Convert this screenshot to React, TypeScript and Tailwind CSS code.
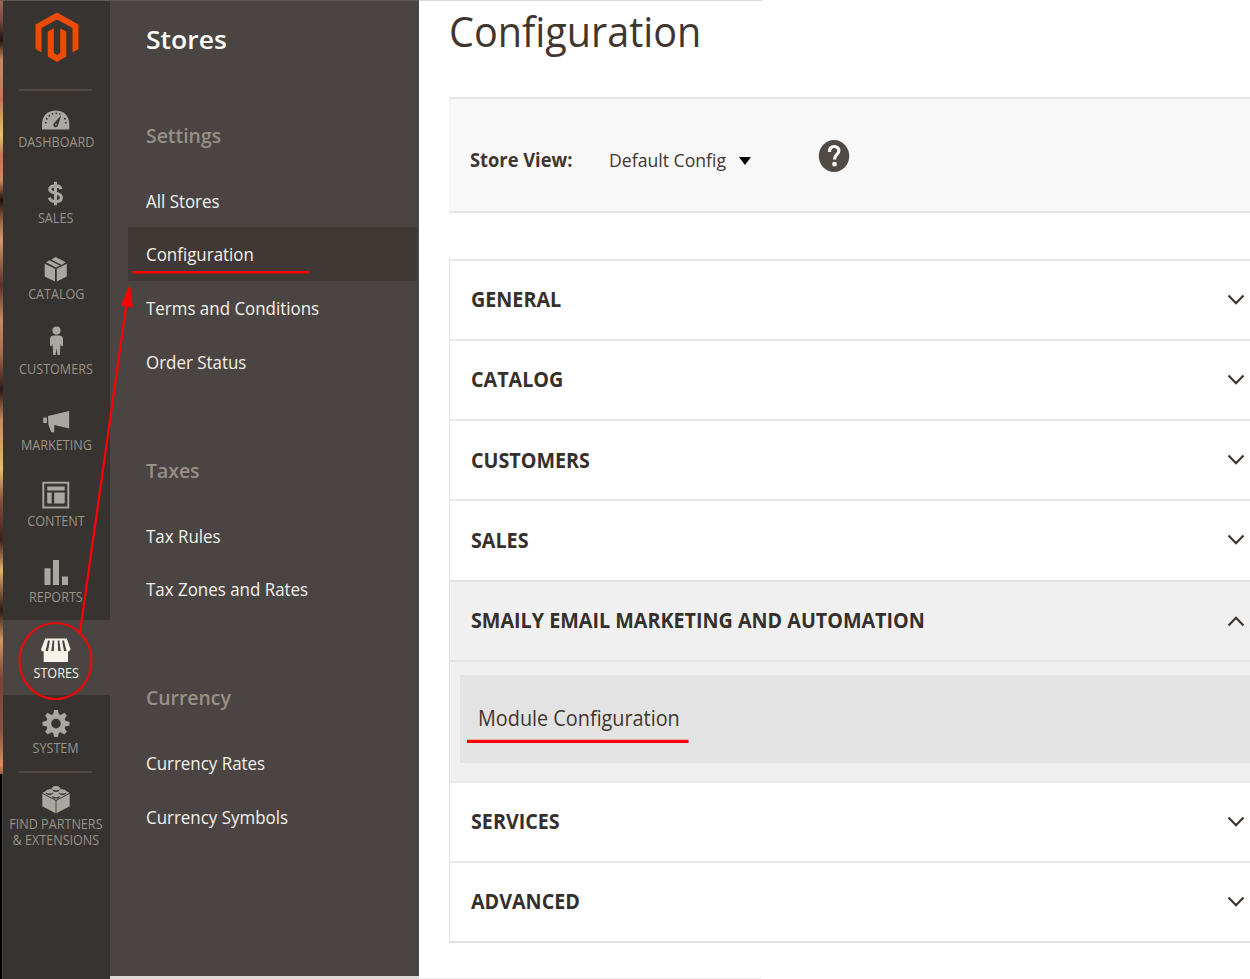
import React from 'react';

type NavItem = { label: string[]; icon: React.ReactNode; y: number; active?: boolean };

const navItems: NavItem[] = [
  {
    label: ['DASHBOARD'],
    y: 104,
    icon: (
      <>
        <path d="M42 129.500V124C42 115.500 48 110.500 55.700 110.500S69.300 115.500 69.300 124V129.500Z" />
        <path d="M53.800 123.500A2.400 2.400 0 1 0 58.200 124.800L61.200 115.200Z" fill="#373330" />
        <circle cx="56" cy="124.300" r="0.900" />
        <g fill="#373330">
          <rect x="45" y="122" width="1.600" height="1.400" />
          <rect x="46" y="118" width="1.600" height="1.600" />
          <rect x="48.500" y="115" width="1.600" height="1.600" />
          <rect x="51.800" y="113.200" width="1.500" height="1.500" />
          <rect x="55.500" y="112.700" width="1.500" height="1.500" />
          <rect x="59" y="113.300" width="1.500" height="1.300" />
          <rect x="64" y="118" width="1.600" height="1.600" />
          <rect x="65" y="122" width="1.600" height="1.400" />
        </g>
      </>
    ),
  },
  {
    label: ['SALES'],
    y: 179.8,
    icon: (
      <path
        d="M61 189C60.300 186.500 58.300 185.700 55.800 185.700C52.500 185.700 49.800 187 49.800 189.400C49.800 194.300 61.400 191.300 61.400 197.200C61.400 200 58.800 201.300 55.500 201.300C52.500 201.300 50 200 49.400 197.400M55.500 181.500V205"
        fill="none"
        stroke="currentColor"
        strokeWidth="3.100"
      />
    ),
  },
  {
    label: ['CATALOG'],
    y: 255.6,
    icon: (
      <path d="M44.700 263.300L55 268.300V281.200L44.700 276ZM66.800 263.300V276L56.800 281.200V268.300ZM46 261.900L49.500 259.800L60 265.300L56 267ZM51.200 259L55.700 256.500L65.600 261.900L61.600 264.500Z" />
    ),
  },
  {
    label: ['CUSTOMERS'],
    y: 331.4,
    icon: (
      <>
        <circle cx="56.500" cy="331" r="4.100" />
        <path d="M53.500 335.800H59.500Q63 336.200 63 339.500V346Q62 347.500 61 346L60.500 344L59.800 355.400H57.500L56.500 349L55.500 355.400H53.200L52.500 344L52 346Q51 347.500 50 346V339.500Q50 336.200 53.500 335.800Z" />
      </>
    ),
  },
  {
    label: ['MARKETING'],
    y: 407.2,
    icon: <path d="M43.200 417.700H46.900V423.200H43.200ZM48 416.200L69.200 411.200V428.700L54.200 425.200V432.400H51.200L48.400 424.700Z" />,
  },
  {
    label: ['CONTENT'],
    y: 483,
    icon: (
      <>
        <rect x="43.300" y="482.700" width="25" height="24.800" fill="none" stroke="currentColor" strokeWidth="1.900" />
        <path d="M47.200 486.500H64.700V490.500H47.200ZM47.200 492.500H51.700V503.500H47.200ZM54.200 492.500H64.700V503.500H54.200Z" />
      </>
    ),
  },
  {
    label: ['REPORTS'],
    y: 558.8,
    icon: <path d="M44.500 568H50.500V584.700H44.500ZM53 559.700H59V584.700H53ZM62 576.200H68V584.700H62Z" />,
  },
  {
    label: ['STORES'],
    y: 634.6,
    active: true,
    icon: (
      <>
        <path d="M45.200 638H66.800L70.500 648.500Q70 651 68 651V661.500H43.700V651Q41 651 41.200 648.500Z" />
        <path
          d="M48 640H50L48 650.500H45.500ZM52.600 640H54.300L53.800 650.500H51.300ZM57.700 640H59.400L60.700 650.500H58.200ZM62 640H64L66.500 650.500H64Z"
          fill="#4a4542"
        />
      </>
    ),
  },
  {
    label: ['SYSTEM'],
    y: 710.4,
    icon: (
      <>
        <circle cx="56" cy="724" r="7.300" fill="none" stroke="currentColor" strokeWidth="5" />
        <g>
          <path d="M52.800 716L54.200 710.500H57.800L59.200 716Z" />
          <path d="M52.800 716L54.200 710.500H57.800L59.200 716Z" transform="rotate(45 56 724)" />
          <path d="M52.800 716L54.200 710.500H57.800L59.200 716Z" transform="rotate(90 56 724)" />
          <path d="M52.800 716L54.200 710.500H57.800L59.200 716Z" transform="rotate(135 56 724)" />
          <path d="M52.800 716L54.200 710.500H57.800L59.200 716Z" transform="rotate(180 56 724)" />
          <path d="M52.800 716L54.200 710.500H57.800L59.200 716Z" transform="rotate(225 56 724)" />
          <path d="M52.800 716L54.200 710.500H57.800L59.200 716Z" transform="rotate(270 56 724)" />
          <path d="M52.800 716L54.200 710.500H57.800L59.200 716Z" transform="rotate(315 56 724)" />
        </g>
      </>
    ),
  },
  {
    label: ['FIND PARTNERS', '& EXTENSIONS'],
    y: 786.2,
    icon: (
      <>
        <path d="M42.300 794L55.600 801V813.500L42.300 806.500ZM69.700 794V806.500L56.400 813.500V801ZM42.500 793L56 787L69.500 793L56 800.200Z" />
        <g fill="#373330">
          <ellipse cx="56" cy="790.100" rx="3.700" ry="1.800" />
          <ellipse cx="49.500" cy="793.300" rx="3.700" ry="1.800" />
          <ellipse cx="62.500" cy="793.300" rx="3.700" ry="1.800" />
          <ellipse cx="56" cy="796.900" rx="3.700" ry="1.800" />
        </g>
        <ellipse cx="56" cy="788.400" rx="3.800" ry="2.100" />
        <ellipse cx="49.500" cy="791.700" rx="3.800" ry="2.100" />
        <ellipse cx="62.500" cy="791.700" rx="3.800" ry="2.100" />
        <ellipse cx="56" cy="795.300" rx="3.800" ry="2.100" />
      </>
    ),
  },
];

type MenuGroup = { title: string; items: string[] };

const groups: MenuGroup[] = [
  { title: 'Settings', items: ['All Stores', 'Configuration', 'Terms and Conditions', 'Order Status'] },
  { title: 'Taxes', items: ['Tax Rules', 'Tax Zones and Rates'] },
  { title: 'Currency', items: ['Currency Rates', 'Currency Symbols'] },
];

function Sidebar() {
  return (
    <nav className="flex w-[106.500px] shrink-0 flex-col bg-[#373330]">
      <div className="flex h-[89px] shrink-0 justify-center pt-[12px] pl-[1px]">
        <svg width="44" height="50" viewBox="0 0 44 50" fill="#eb4b05">
          <path d="M22 .5L43.500 12.500V37L37.500 40.500V16L22 7.500L6.500 16V40.500L.5 37V12.500Z" />
          <path d="M12.700 19.500L18.800 16.200V41L22 43L25.200 41V16.200L31.300 19.500V44.500L22 50L12.700 44.500Z" />
        </svg>
      </div>
      {navItems.map((item, i) => (
        <React.Fragment key={item.label[0]}>
          {(i === 0 || i === 9) && <div className="-mb-[2px] ml-[16.400px] h-[2px] w-[72.500px] shrink-0 bg-[#504944]" />}
          <a
            className={
              item.active
                ? 'flex h-[75.800px] shrink-0 flex-col items-center bg-[#4a4542] pr-[0.500px] text-[#f7f3eb]'
                : 'flex h-[75.800px] shrink-0 flex-col items-center pr-[0.500px] text-[#aaa6a0]'
            }
          >
            <svg
              className="mt-[15px] h-[30px] w-[30px] shrink-0 overflow-visible"
              viewBox={`41 ${item.y} 30 30`}
              fill="currentColor"
            >
              {item.icon}
            </svg>
            <span
              className={
                item.active
                  ? 'flex origin-center scale-x-[0.9] flex-col items-center text-[14px] leading-[16px] whitespace-nowrap'
                  : 'flex origin-center scale-x-[0.9] flex-col items-center text-[14px] leading-[16px] whitespace-nowrap text-[#989287]'
              }
            >
              {item.label.map((line) => (
                <span key={line}>{line}</span>
              ))}
            </span>
          </a>
        </React.Fragment>
      ))}
    </nav>
  );
}

function Submenu() {
  return (
    <aside className="flex w-[309.500px] shrink-0 flex-col border-b-[3px] border-[#dcdad8] bg-[#4a4542]">
      <h2 className="mt-[20px] pl-[36.500px] text-[26px] leading-[38px] font-semibold text-[#fcfbf8]">
        <span className="inline-block origin-left scale-x-[1.02]">Stores</span>
      </h2>
      <div className="mt-[62px] flex flex-col gap-[66px]">
        {groups.map((group) => (
          <section key={group.title}>
            <h3 className="pl-[36.500px] text-[20px] leading-[32px] font-semibold text-[#989086]">
              <span className="inline-block origin-left scale-x-[0.97]">{group.title}</span>
            </h3>
            <ul className="mt-[21.500px]">
              {group.items.map((item) => (
                <li
                  key={item}
                  className={
                    item === 'Configuration'
                      ? 'mr-[2px] ml-[18px] h-[53.900px] bg-[#403834] pl-[18.500px] text-[18px] leading-[54px] text-[#f3f0ea]'
                      : 'mr-[2px] ml-[18px] h-[53.900px] pl-[18.500px] text-[18px] leading-[54px] text-[#f3f0ea]'
                  }
                >
                  <span className="inline-block origin-left scale-x-[0.94]">{item}</span>
                </li>
              ))}
            </ul>
          </section>
        ))}
      </div>
    </aside>
  );
}

function SectionHeader({ title, open }: { title: string; open?: boolean }) {
  return (
    <div
      className={
        open
          ? 'flex h-[80.200px] items-center justify-between border-t-2 border-[#e3e3e3] bg-[#f0f0f0] pr-[5px] pl-[21px]'
          : 'flex h-[80.200px] items-center justify-between border-t-2 border-[#e8e8e8] pr-[5px] pl-[21px]'
      }
    >
      <span className="text-[21px] font-bold whitespace-nowrap text-[#35302c]">
        <span className="inline-block origin-left scale-x-[0.939]">{title}</span>
      </span>
      <svg width="18" height="12" viewBox="0 0 18 12" fill="none" stroke="#41362f" strokeWidth="2.300">
        {open ? <path d="M1.500 10.500L9 2.800L16.500 10.500" /> : <path d="M1.500 1.500L9 9.200L16.500 1.500" />}
      </svg>
    </div>
  );
}

function Content() {
  return (
    <main className="flex min-w-0 flex-1 flex-col pl-[30px]">
      <h1 className="h-[97px] text-[42px] leading-[62px] text-[#41362f]">
        <span className="inline-block origin-left scale-x-[0.942]">Configuration</span>
      </h1>
      <div className="flex h-[116px] shrink-0 items-center border-y-2 border-[#e5e5e5] bg-[#f8f8f8] pl-[20.500px] text-[19px] text-[#41362f]">
        <span className="w-[139.500px] pt-[10px] font-bold whitespace-nowrap">
          <span className="inline-block origin-left scale-x-[0.963]">Store View:</span>
        </span>
        <span className="w-[130px] pt-[10px] whitespace-nowrap">
          <span className="inline-block origin-left scale-x-[0.928]">Default Config</span>
        </span>
        <svg className="mt-[11px]" width="12" height="8" viewBox="0 0 12 8">
          <path d="M0 0H12L6 8Z" fill="#000" />
        </svg>
        <svg className="mt-[2px] ml-[67px]" width="32" height="34" viewBox="0 0 32 34">
          <ellipse cx="16" cy="17" rx="15.200" ry="16" fill="#514943" />
          <path
            d="M11.500 13C11.500 9 13.500 7.500 16.200 7.500C19 7.500 20.900 9.200 20.900 11.700C20.900 15.500 16.500 15.500 16.500 20.500"
            fill="none"
            stroke="#fff"
            strokeWidth="3.200"
          />
          <rect x="14.400" y="23" width="4.200" height="4.300" rx="1" fill="#fff" />
        </svg>
      </div>
      <div className="mt-[45.800px] flex flex-col border-b-2 border-l border-[#e2e2e2]">
        <SectionHeader title="GENERAL" />
        <SectionHeader title="CATALOG" />
        <SectionHeader title="CUSTOMERS" />
        <SectionHeader title="SALES" />
        <SectionHeader title="SMAILY EMAIL MARKETING AND AUTOMATION" open />
        <div className="h-[121px] border-t-2 border-[#e3e3e3] bg-[#f0f0f0] pt-[13px] pl-[10px]">
          <div className="flex h-[88px] items-center bg-[#e3e3e3] pl-[18px] text-[21px] text-[#41362f]">
            <span className="inline-block origin-left scale-x-[0.944]">Module Configuration</span>
          </div>
        </div>
        <SectionHeader title="SERVICES" />
        <SectionHeader title="ADVANCED" />
      </div>
    </main>
  );
}

export default function App() {
  return (
    <div className="relative flex h-[979px] w-[1250px] overflow-hidden bg-white font-['Open_Sans',sans-serif]">
      <div className="flex w-[3px] shrink-0 flex-col">
        <div className="h-[774px] bg-[linear-gradient(180deg,#9a6a58_0px,#7a4a44_20px,#1c1210_40px,#c98a60_60px,#c07850_100px,#e8c070_135px,#c07850_155px,#d08a5c_180px,#1a1010_200px,#a06848_222px,#d89868_240px,#5a3030_285px,#c98a60_320px,#b07050_350px,#2a1818_390px,#c98a58_420px,#e8b870_470px,#8a5040_500px,#3a2020_540px,#e8b068_570px,#2a1818_610px,#d89860_640px,#7a4038_680px,#8a5044_730px,#d89058_765px,#a05840_774px)]" />
        <div className="flex-1 border-r border-[#444] bg-black" />
      </div>
      <Sidebar />
      <Submenu />
      <Content />
      <div className="absolute top-0 left-0 h-px w-[419px] bg-[#5f5b58]" />
      <div className="absolute top-0 left-[419px] h-px w-[343px] bg-[#dcdcdc]" />
      <div className="absolute bottom-0 left-[419px] h-px w-[342px] bg-[#eeeeee]" />
      <svg className="pointer-events-none absolute inset-0" width="1250" height="979" viewBox="0 0 1250 979" fill="none">
        <ellipse cx="55.500" cy="661" rx="36" ry="38" stroke="#e60b0b" strokeWidth="2.200" />
        <path d="M80 632L127 300" stroke="#ff0000" strokeWidth="2.200" />
        <path d="M129.700 284L121 305.500L133 307.500Z" fill="#ff0000" />
        <path d="M132.500 272.300H309" stroke="#ff0000" strokeWidth="2.400" />
        <path d="M467 741.300H688.500" stroke="#ff0000" strokeWidth="3.200" />
      </svg>
    </div>
  );
}
